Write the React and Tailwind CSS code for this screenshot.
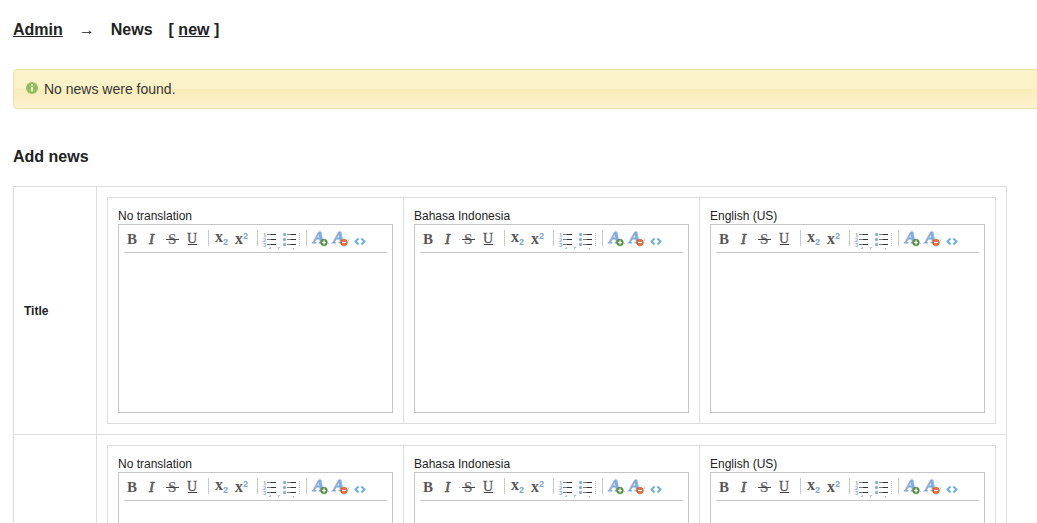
import React from 'react';

const INK = '#585858';
const BLUE = '#76a5e0';
const SERIF = '"Liberation Serif", serif';
const SANS = '"Liberation Sans", sans-serif';

function Tool({ label, children }) {
  return (
    <button type="button" aria-label={label} className="w-5 h-[27px] shrink-0 cursor-pointer">
      <svg viewBox="0 0 20 27" className="block w-5 h-[27px] overflow-visible" aria-hidden="true">
        {children}
      </svg>
    </button>
  );
}

function Separator() {
  return <span className="mx-1 mt-[5px] h-4 w-px shrink-0 bg-[#c9c9c9]" />;
}

function Lines() {
  return (
    <g strokeWidth="1">
      {[9.5, 14.5, 19.5].map((y) => (
        <g key={y}>
          <path d={`M5 ${y}h9`} stroke="#777" />
          <path d={`M9 ${y}h5`} stroke="#333" />
        </g>
      ))}
    </g>
  );
}

function BigA() {
  return (
    <text x="2" y="18" fontFamily={SERIF} fontSize="17" fontWeight="bold" fontStyle="italic" fill="#7ea8e0" stroke="#86aee3" strokeWidth="0.9">
      A
    </text>
  );
}

function Toolbar() {
  return (
    <div className="mx-[5px] flex h-7 items-start border-b border-[#c5c5c5]">
      <Tool label="Bold">
        <text x="3" y="19" fontFamily={SERIF} fontSize="15" fontWeight="bold" fill={INK}>B</text>
      </Tool>
      <Tool label="Italic">
        <text x="5" y="19" fontFamily={SERIF} fontSize="15" fontStyle="italic" fill={INK} stroke={INK} strokeWidth="0.6">I</text>
      </Tool>
      <Tool label="Strikethrough">
        <text x="4" y="19" fontFamily={SERIF} fontSize="15" fontWeight="bold" fill="#707070">S</text>
        <path d="M2 14.5h13" stroke="#444" strokeWidth="1" />
        <path d="M-1 14.5h1" stroke="#ccc" strokeWidth="1" />
      </Tool>
      <Tool label="Underline">
        <text x="3" y="18" fontFamily={SERIF} fontSize="14" fill={INK} stroke={INK} strokeWidth="0.3">U</text>
        <path d="M4 19.5h9" stroke="#444" strokeWidth="1" />
      </Tool>
      <Separator />
      <Tool label="Subscript">
        <text x="2" y="17" fontFamily={SERIF} fontSize="16" fontWeight="bold" fill={INK}>x</text>
        <text x="10" y="20" fontFamily={SANS} fontSize="9" fontWeight="bold" fill={BLUE}>2</text>
      </Tool>
      <Tool label="Superscript">
        <text x="2" y="19" fontFamily={SERIF} fontSize="16" fontWeight="bold" fill={INK}>x</text>
        <text x="10" y="14" fontFamily={SANS} fontSize="9" fontWeight="bold" fill={BLUE}>2</text>
      </Tool>
      <Separator />
      <Tool label="Numbered list">
        <g fontFamily={SANS} fontSize="6" fontWeight="bold" fill="#86aee0">
          <text x="1" y="12">1</text>
          <text x="1" y="17">2</text>
          <text x="1" y="22">3</text>
        </g>
        <Lines />
        <path d="M7 23.5h2M8 22.5h1M16 22.5h2M16.500 22v2" stroke="#a3c1e8" strokeWidth="1" />
      </Tool>
      <Tool label="Bulleted list">
        <g fill="#86b0e6">
          <rect x="1" y="8" width="3" height="3" rx="1" />
          <rect x="1" y="13" width="3" height="3" rx="1" />
          <rect x="1" y="18" width="3" height="3" rx="1" />
        </g>
        <Lines />
        <path d="M17.500 8v13" stroke="#9fbfe8" strokeWidth="1" strokeDasharray="1 1" />
        <path d="M11 23.500h1" stroke="#a3c1e8" strokeWidth="1" />
      </Tool>
      <Separator />
      <Tool label="Add format">
        <BigA />
        <circle cx="13" cy="17.500" r="3.300" fill="#5f9c45" stroke="#487f33" strokeWidth="0.7" />
        <path d="M11 17.500h4M13 15.500v4" stroke="#fff" strokeWidth="1.2" />
        <path d="M17 18.500h1" stroke="#b5cceb" strokeWidth="1" />
      </Tool>
      <Tool label="Remove format">
        <BigA />
        <circle cx="13" cy="17.500" r="3.300" fill="#e36f36" stroke="#c95a25" strokeWidth="0.7" />
        <path d="M11 17.500h4" stroke="#fff" strokeWidth="1.300" />
        <path d="M17.500 14v2" stroke="#b5cceb" strokeWidth="1" />
      </Tool>
      <Tool label="Source code">
        <path d="M7.500 13.500L4.500 16.500L7.500 19.500M10.500 13.500L13.500 16.500L10.500 19.500" fill="none" stroke="#62aae8" strokeWidth="1.8" />
      </Tool>
    </div>
  );
}

function Editor({ id, language }) {
  return (
    <td className="border border-[#dddddd] p-[10px] align-top">
      <label htmlFor={id} className="block text-xs leading-4">{language}</label>
      <div className="border border-[#c5c5c5]">
        <Toolbar />
        <textarea id={id} className="block h-[159px] w-full resize-none p-2 text-xs outline-none" />
      </div>
    </td>
  );
}

const LANGUAGES = ['No translation', 'Bahasa Indonesia', 'English (US)'];

function FieldRow({ name, title }) {
  return (
    <tr>
      <th scope="row" className="w-[83px] border border-[#dddddd] p-[10px] text-left text-xs font-bold">{title}</th>
      <td className="border border-[#dddddd] p-[10px]">
        <table className="w-full table-fixed border-collapse">
          <tbody>
            <tr>
              {LANGUAGES.map((language, i) => (
                <Editor key={language} id={`${name}-${i}`} language={language} />
              ))}
            </tr>
          </tbody>
        </table>
      </td>
    </tr>
  );
}

export default function App() {
  return (
    <main className="h-screen overflow-hidden bg-white pl-[13px] font-['Liberation_Sans',Arial,sans-serif] text-[#222222]">
      <h1 className="flex gap-4 pt-5 text-base leading-5 font-bold">
        <a href="#admin" className="underline">Admin</a>
        <span className="w-4 text-center font-normal">→</span>
        <span>News</span>
        <span>[ <a href="#new" className="underline">new</a> ]</span>
      </h1>

      <div role="status" className="-mr-3 mt-[29px] flex h-10 items-center rounded border border-[#e6dfae] bg-[linear-gradient(#fbf2c9_50%,#faecb8_50%,#fcf2cf)] pl-3 text-sm text-[#363636]">
        <svg viewBox="0 0 12 12" className="mr-[6px] -mt-0.5 size-3" aria-hidden="true">
          <circle cx="6" cy="6" r="6" fill="#8fc05f" />
          <path d="M5 2h2v2H5zM5 5h2v4.500H5z" fill="#fbf2c9" />
        </svg>
        No news were found.
      </div>

      <h2 className="mt-[38px] text-base leading-5 font-bold">Add news</h2>

      <table className="mt-[19px] w-[calc(100%-30px)] table-fixed border-collapse">
        <tbody>
          <FieldRow name="title" title="Title" />
          <FieldRow name="body" />
        </tbody>
      </table>
    </main>
  );
}
